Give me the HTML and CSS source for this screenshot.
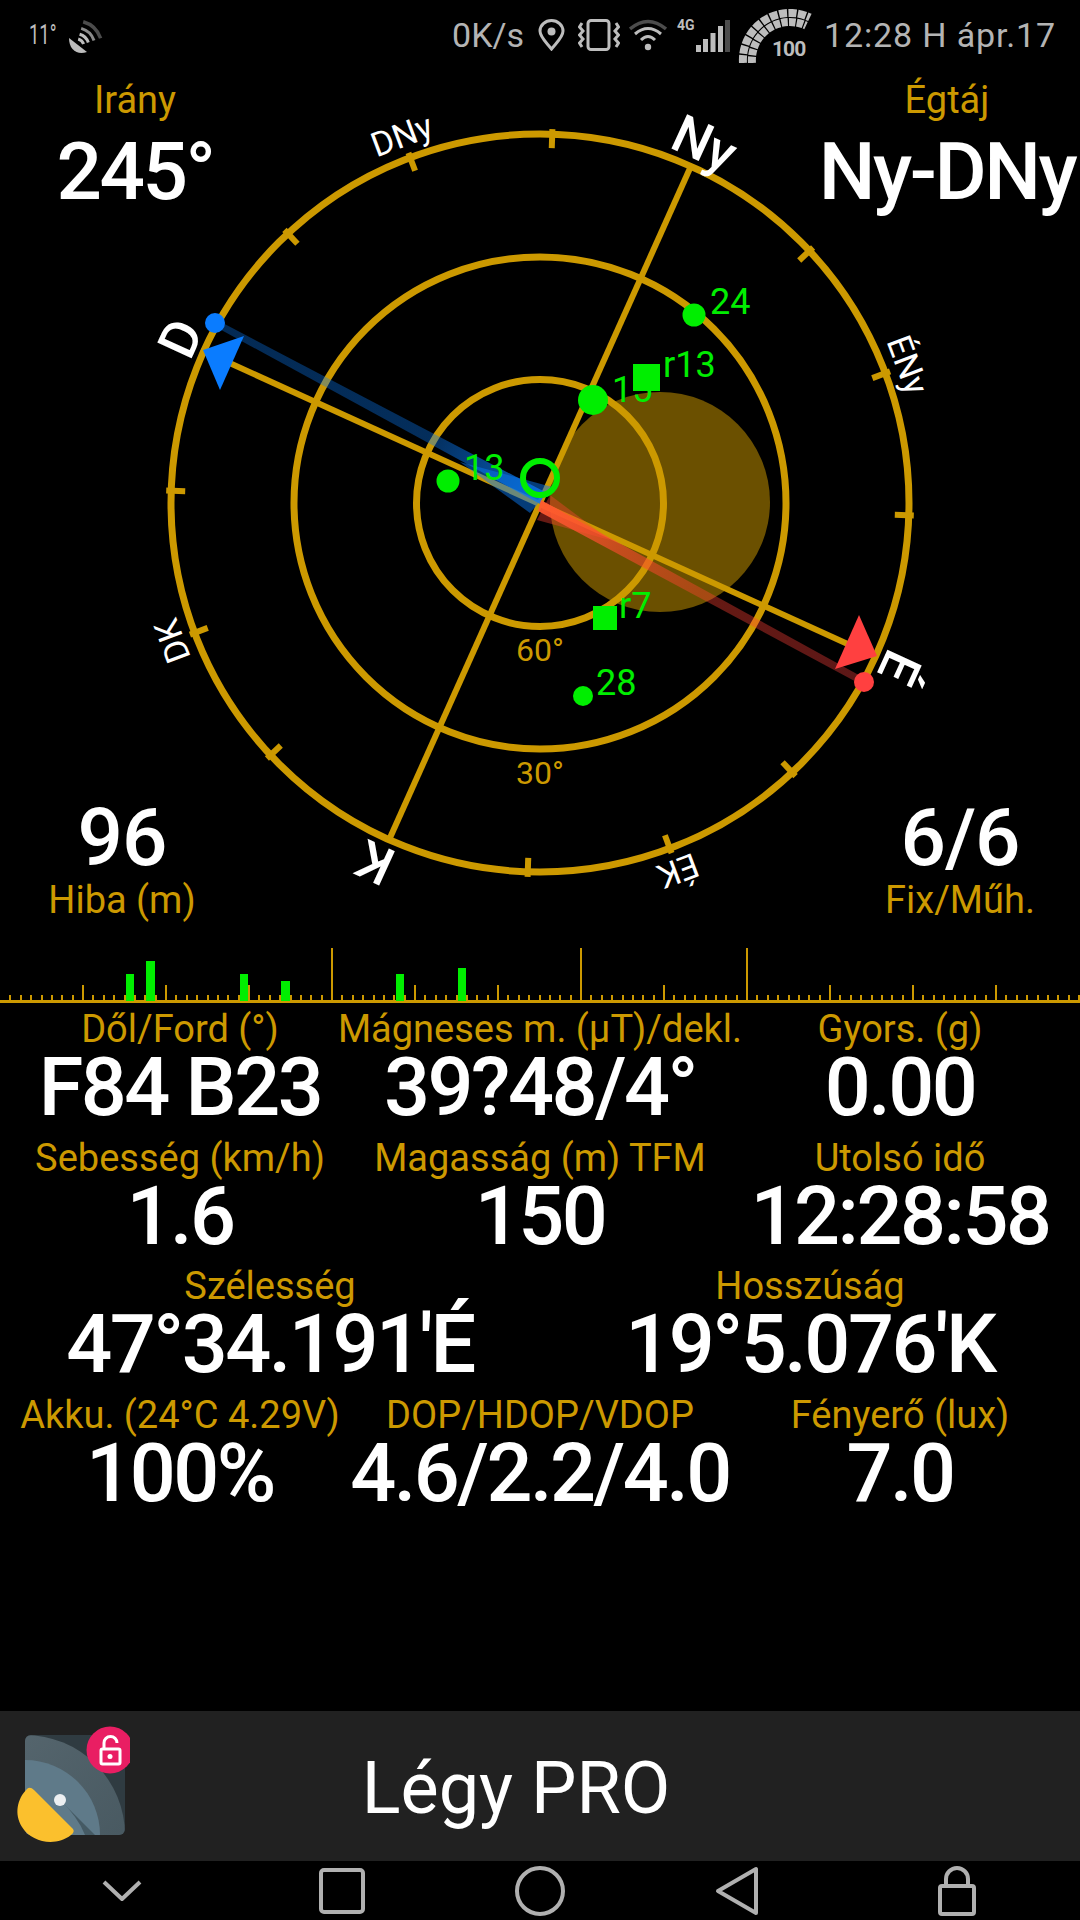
FILE: index.html
```html
<!DOCTYPE html>
<html lang="hu">
<head>
<meta charset="utf-8">
<title>GPS</title>
<link rel="stylesheet" href="styles.css">
</head>
<body>
<div class="screen">
  <header class="status">
    <span class="temp">11°</span>
    <svg class="ic-sat" viewBox="0 0 34 34" width="34" height="34">
      <path class="fill-grey" d="M0 18 L18 32 Q9 35 3.500 29 Q0 25 0 18Z"/>
      <path class="st-grey" d="M9.200 19 A8 8 0 0 1 14.600 24.100 M10.600 14.200 A13 13 0 0 1 19.300 22.500"/>
      <path class="st-mid" d="M12.200 8.400 A19 19 0 0 1 25 20.500"/>
      <path class="st-dim" d="M14.200 1.700 A26 26 0 0 1 31.600 18.200"/>
    </svg>
    <span class="grow"></span>
    <span class="stat-text rate">0K/s</span>
    <svg class="ic-pin" viewBox="0 0 27 32" width="27" height="32">
      <path class="st-grey" d="M13.500 30 C8 23 2 18 2 12 A11.500 10.500 0 0 1 25 12 C25 18 19 23 13.500 30Z"/>
      <circle class="fill-grey" cx="13.500" cy="12.500" r="4"/>
    </svg>
    <svg class="ic-vib" viewBox="0 0 42 32" width="42" height="32">
      <rect class="st-grey" x="10" y="1.500" width="21" height="29" rx="3"/>
      <path class="st-grey" d="M4 4 L1.500 8 L5 12 L1.500 16 L5 20 L1.500 24 L4 28 M38 4 L40.500 8 L37 12 L40.500 16 L37 20 L40.500 24 L38 28"/>
    </svg>
    <svg class="ic-wifi" viewBox="0 0 38 32" width="38" height="32">
      <path class="st-dim" d="M1 10 Q19 -5 37 10"/>
      <path class="st-grey" d="M6 15 Q19 4 32 15 M12 21 Q19 14 26 21"/>
      <circle class="fill-grey" cx="19" cy="28" r="3.200"/>
    </svg>
    <div class="signal">
      <span class="net">4G</span>
      <svg class="ic-bars" viewBox="0 0 34 33" width="34" height="33">
        <rect class="fill-grey" x="0" y="25" width="5" height="7"/>
        <rect class="fill-grey" x="7" y="19" width="5" height="13"/>
        <rect class="fill-grey" x="14.500" y="13" width="5" height="19"/>
        <rect class="fill-grey" x="22" y="6" width="5" height="26"/>
        <rect class="fill-dim" x="29" y="0" width="5" height="32"/>
      </svg>
    </div>
    <div class="gauge">
      <svg viewBox="0 0 76 54" width="76" height="54">
        <path class="gauge-arc outer" d="M5 54 A47 47 0 0 1 71.900 8.400"/>
        <path class="gauge-arc inner" d="M14 54 A38 38 0 0 1 68 16.600"/>
      </svg>
      <span class="gauge-num">100</span>
    </div>
    <span class="stat-text clock">12:28 H ápr.17</span>
  </header>

  <section class="compass">
    <svg class="dial" viewBox="0 70 1080 878" width="1080" height="878">
      <defs>
        <linearGradient id="blueBand" gradientUnits="userSpaceOnUse" x1="215" y1="323" x2="540" y2="505">
          <stop offset="0" stop-color="#0a78f0" stop-opacity=".35"/>
          <stop offset=".65" stop-color="#0a78f0" stop-opacity=".38"/>
          <stop offset="1" stop-color="#0a78f0" stop-opacity=".8"/>
        </linearGradient>
        <linearGradient id="redBand" gradientUnits="userSpaceOnUse" x1="540" y1="505" x2="864" y2="682">
          <stop offset="0" stop-color="#ff5a30" stop-opacity=".95"/>
          <stop offset=".25" stop-color="#ff4a30" stop-opacity=".6"/>
          <stop offset=".5" stop-color="#ff4030" stop-opacity=".4"/>
          <stop offset="1" stop-color="#ff4040" stop-opacity=".36"/>
        </linearGradient>
      </defs>
      <circle class="shade" cx="660" cy="502" r="110"/>
      <circle class="ring" cx="540" cy="503" r="369"/>
      <circle class="ring" cx="540" cy="503" r="246"/>
      <circle class="ring" cx="540" cy="503" r="123.500"/>
      <line class="axis" x1="691" y1="166" x2="389" y2="840"/>
      <line class="axis" x1="201" y1="350" x2="874" y2="656"/>
      <g class="ticks">
        <line x1="540" y1="129" x2="540" y2="148" transform="rotate(1.9 540 503)"/>
        <line x1="540" y1="129" x2="540" y2="148" transform="rotate(46.9 540 503)"/>
        <line x1="540" y1="129" x2="540" y2="148" transform="rotate(69.4 540 503)"/>
        <line x1="540" y1="129" x2="540" y2="148" transform="rotate(91.9 540 503)"/>
        <line x1="540" y1="129" x2="540" y2="148" transform="rotate(136.9 540 503)"/>
        <line x1="540" y1="129" x2="540" y2="148" transform="rotate(159.4 540 503)"/>
        <line x1="540" y1="129" x2="540" y2="148" transform="rotate(181.9 540 503)"/>
        <line x1="540" y1="129" x2="540" y2="148" transform="rotate(226.9 540 503)"/>
        <line x1="540" y1="129" x2="540" y2="148" transform="rotate(249.4 540 503)"/>
        <line x1="540" y1="129" x2="540" y2="148" transform="rotate(271.9 540 503)"/>
        <line x1="540" y1="129" x2="540" y2="148" transform="rotate(316.9 540 503)"/>
        <line x1="540" y1="129" x2="540" y2="148" transform="rotate(339.4 540 503)"/>
      </g>
      <g class="dir-major">
        <text x="540" y="126" transform="rotate(24.6 540 503)">Ny</text>
        <text x="540" y="126" transform="rotate(114.6 540 503)">É</text>
        <text x="540" y="126" transform="rotate(204.6 540 503)">K</text>
        <text x="540" y="126" transform="rotate(294.6 540 503)">D</text>
      </g>
      <g class="dir-minor">
        <text x="540" y="122" transform="rotate(339.4 540 503)">DNy</text>
        <text x="540" y="122" transform="rotate(69.4 540 503)">ÉNy</text>
        <text x="540" y="122" transform="rotate(159.4 540 503)">ÉK</text>
        <text x="540" y="122" transform="rotate(249.4 540 503)">DK</text>
      </g>
      <text class="deg" x="540" y="661">60°</text>
      <text class="deg" x="540" y="784">30°</text>
      <polygon fill="url(#blueBand)" points="217,320 545,492 540,504 214,326"/>
      <polygon class="wedge-blue" points="552,487 530,513 460,462"/>
      <polygon class="wedge-red" points="550,495 537,520 610,540"/>
      <polygon fill="url(#redBand)" points="541,500 866,679 862,685 538,511"/>
      <circle class="blue" cx="215" cy="323" r="10"/>
      <circle class="red" cx="864" cy="682" r="10"/>
      <polygon class="blue" points="244,336 203,350 220,390"/>
      <polygon class="red" points="859,615 877,656 835,669"/>
      <g class="sats">
        <circle cx="540" cy="478" r="17" class="sat-ring"/>
        <circle cx="448" cy="481" r="11.500"/>
        <text x="464" y="480">13</text>
        <circle cx="593" cy="400" r="15"/>
        <text x="612" y="402">15</text>
        <circle cx="694" cy="315" r="11.500"/>
        <text x="710" y="314">24</text>
        <circle cx="583" cy="696" r="10"/>
        <text x="596" y="695">28</text>
        <rect x="633" y="364" width="27" height="27"/>
        <text x="663" y="377">r13</text>
        <rect x="593" y="606" width="24" height="24"/>
        <text x="619" y="618">r7</text>
      </g>
    </svg>
    <div class="corners">
      <div class="corner-row">
        <div class="corner c-heading"><span class="label">Irány</span><span class="corner-val">245°</span></div>
        <div class="corner c-cardinal"><span class="label">Égtáj</span><span class="corner-val">Ny-DNy</span></div>
      </div>
      <div class="corner-row">
        <div class="corner c-error"><span class="corner-val small">96</span><span class="label">Hiba (m)</span></div>
        <div class="corner c-fix"><span class="corner-val small">6/6</span><span class="label">Fix/Műh.</span></div>
      </div>
    </div>
  </section>

  <svg class="strip" viewBox="0 948 1080 56" width="1080" height="56">
    <path class="tick" d="M0 1001m10 -6v6m11 -6v6m10 -6v6m11 -6v6m10 -6v6m10 -6v6m11 -6v6m10 -6v6m10 -6v6m11 -6v6m10 -6v6m11 -6v6m10 -6v6m10 -6v6m11 -6v6m10 -6v6m10 -6v6m11 -6v6m10 -6v6m11 -6v6m10 -6v6m10 -6v6m11 -6v6m10 -6v6m10 -6v6m11 -6v6m10 -6v6m11 -6v6m10 -6v6m10 -6v6m11 -6v6m10 -6v6m10 -6v6m11 -6v6m10 -6v6m11 -6v6m10 -6v6m10 -6v6m11 -6v6m10 -6v6m10 -6v6m11 -6v6m10 -6v6m11 -6v6m10 -6v6m10 -6v6m11 -6v6m10 -6v6m10 -6v6m11 -6v6m10 -6v6m11 -6v6m10 -6v6m10 -6v6m11 -6v6m10 -6v6m10 -6v6m11 -6v6m10 -6v6m11 -6v6m10 -6v6m10 -6v6m11 -6v6m10 -6v6m10 -6v6m11 -6v6m10 -6v6m11 -6v6m10 -6v6m10 -6v6m11 -6v6m10 -6v6m10 -6v6m11 -6v6m10 -6v6m11 -6v6m10 -6v6m10 -6v6m11 -6v6m10 -6v6m10 -6v6m11 -6v6m10 -6v6m11 -6v6m10 -6v6m10 -6v6m11 -6v6m10 -6v6m10 -6v6m11 -6v6m10 -6v6m11 -6v6m10 -6v6m10 -6v6m11 -6v6m10 -6v6m10 -6v6m11 -6v6m10 -6v6m11 -6v6m10 -6v6m10 -6v6m11 -6v6m10 -6v6"/>
    <path class="tick" d="M83 1001v-16M166 1001v-16M249 1001v-16M415 1001v-16M498 1001v-16M664 1001v-16M830 1001v-16M913 1001v-16M996 1001v-16"/>
    <path class="tick" d="M332 1001v-53M581 1001v-53M747 1001v-53"/>
    <rect class="gold" x="0" y="1000" width="1080" height="3"/>
    <g class="bars">
      <rect x="126" y="974" width="8" height="27"/>
      <rect x="146" y="961" width="9" height="40"/>
      <rect x="240" y="974" width="8" height="27"/>
      <rect x="281" y="981" width="9" height="20"/>
      <rect x="396" y="974" width="8" height="27"/>
      <rect x="458" y="968" width="8" height="33"/>
    </g>
  </svg>

  <main class="data">
    <div class="row thirds">
      <div class="cell"><span class="label">Dől/Ford (°)</span><span class="value">F84 B23</span></div>
      <div class="cell"><span class="label">Mágneses m. (µT)/dekl.</span><span class="value">39?48/4°</span></div>
      <div class="cell"><span class="label">Gyors. (g)</span><span class="value">0.00</span></div>
    </div>
    <div class="row thirds">
      <div class="cell"><span class="label">Sebesség (km/h)</span><span class="value">1.6</span></div>
      <div class="cell"><span class="label">Magasság (m) TFM</span><span class="value">150</span></div>
      <div class="cell"><span class="label">Utolsó idő</span><span class="value">12:28:58</span></div>
    </div>
    <div class="row halves">
      <div class="cell"><span class="label">Szélesség</span><span class="value">47°34.191'É</span></div>
      <div class="cell"><span class="label">Hosszúság</span><span class="value">19°5.076'K</span></div>
    </div>
    <div class="row thirds">
      <div class="cell"><span class="label">Akku. (24°C 4.29V)</span><span class="value">100%</span></div>
      <div class="cell"><span class="label">DOP/HDOP/VDOP</span><span class="value">4.6/2.2/4.0</span></div>
      <div class="cell"><span class="label">Fényerő (lux)</span><span class="value">7.0</span></div>
    </div>
  </main>

  <aside class="promo">
    <div class="app-icon">
      <svg viewBox="0 5 130 124" width="130" height="124">
        <defs>
          <clipPath id="tile"><rect x="25" y="16" width="100" height="100" rx="6"/></clipPath>
          <linearGradient id="outerArc" x1="0" y1="0" x2="1" y2="1">
            <stop offset="0" stop-color="#5a6a72"/>
            <stop offset="1" stop-color="#43545c"/>
          </linearGradient>
        </defs>
        <g clip-path="url(#tile)">
          <rect x="25" y="16" width="100" height="100" fill="#2f3b41"/>
          <circle cx="25" cy="116" r="100" fill="url(#outerArc)"/>
          <circle cx="25" cy="116" r="75" fill="#5f7a89"/>
          <path d="M60 81 L125 146 L125 116 L85 116 Q78 98 60 81Z" fill="#455a64"/>
        </g>
        <circle cx="60" cy="81" r="6" fill="#eceff1"/>
        <path d="M27 70 Q30 67 34 71 L73 110 Q75 113 71 116 C56 128 32 124 22 108 C14 95 17 80 27 70Z" fill="#fbc02d"/>
        <circle cx="110" cy="31" r="23.500" fill="#e91e63"/>
        <g class="lock-ic">
          <rect x="101" y="30" width="19" height="15" rx="1.500"/>
          <path d="M104 30 V24 A6.500 6.500 0 0 1 117 24"/>
        </g>
        <circle cx="110" cy="37.500" r="2.500" fill="#fff"/>
      </svg>
    </div>
    <div class="promo-title">Légy PRO</div>
  </aside>

  <nav class="navbar">
    <div class="nav-item"><svg viewBox="0 0 40 22" width="40" height="22"><path class="nav-st" d="M2 2 L20 19 L38 2"/></svg></div>
    <div class="nav-item"><svg viewBox="0 0 46 46" width="46" height="46"><rect class="nav-st" x="2" y="2" width="42" height="42" rx="3"/></svg></div>
    <div class="nav-item"><svg viewBox="0 0 50 50" width="50" height="50"><circle class="nav-st" cx="25" cy="25" r="23"/></svg></div>
    <div class="nav-item"><svg viewBox="0 0 44 50" width="44" height="50"><path class="nav-st" d="M41 3 V47 L3 25Z"/></svg></div>
    <div class="nav-item"><svg viewBox="0 0 40 50" width="40" height="50"><rect class="nav-st" x="3" y="20" width="34" height="28" rx="2"/><path class="nav-st" d="M9 20 V13 A11 11 0 0 1 31 13 V20"/></svg></div>
  </nav>
</div>
</body>
</html>
```
FILE: styles.css
```css
* { box-sizing: border-box; }
html, body { margin: 0; padding: 0; background: #000; }
body { font-family: Roboto, "Noto Sans", sans-serif; color: #fff; }
.screen { width: 1080px; height: 1920px; display: flex; flex-direction: column; overflow: hidden; background: #000; }

/* status bar */
.status { height: 70px; display: flex; align-items: center; padding: 0 24px 0 29px; color: #b4b4b4; flex: none; }
.status svg { display: block; flex: none; }
.grow { flex: 1; }
.temp { font-size: 27px; width: 40px; line-height: 1; transform: scaleX(.68); transform-origin: left center; color: #bdbdbd; }
.ic-sat { margin-top: 3px; }
.stat-text { font-size: 34px; font-weight: 400; line-height: 1; white-space: nowrap; }
.rate { margin-right: 14px; }
.clock { margin-left: 10px; letter-spacing: .850px; }
.fill-grey { fill: #bdbdbd; }
.fill-dim { fill: #4c4c4c; }
.st-grey { fill: none; stroke: #bdbdbd; stroke-width: 3; }
.st-mid { fill: none; stroke: #8a8a8a; stroke-width: 3; }
.st-dim { fill: none; stroke: #4c4c4c; stroke-width: 3.500; }
.ic-vib { margin: 0 9px 0 13px; }
.ic-wifi { margin-right: 10px; }
.signal { position: relative; width: 52px; height: 33px; margin-right: 9px; }
.net { position: absolute; left: 0; top: -1px; font-size: 14px; font-weight: 700; color: #bdbdbd; line-height: 1; }
.ic-bars { position: absolute; left: 19px; top: 1px; }
.gauge { position: relative; width: 76px; height: 54px; margin-top: 2px; }
.gauge-arc { fill: none; stroke: #bdbdbd; stroke-width: 8; }
.gauge-arc.outer { stroke-dasharray: 8 1.400; }
.gauge-arc.inner { stroke-dasharray: 6.500 1.200; }
.gauge-num { position: absolute; left: 34px; top: 30px; font-size: 21px; font-weight: 700; letter-spacing: -1px; color: #bdbdbd; line-height: 1; }

/* compass */
.compass { position: relative; height: 878px; flex: none; }
.dial { display: block; }
.shade { fill: #6b5000; }
.ring { fill: none; stroke: #cc9900; stroke-width: 7; }
.axis { fill: none; stroke: #cc9900; stroke-width: 6; }
.ticks line { stroke: #cc9900; stroke-width: 6; }
.dir-major text, .dir-minor text { fill: #fff; text-anchor: middle; }
.dir-major text { font-size: 53px; font-weight: 500; }
.dir-minor text { font-size: 34px; }
.deg { fill: #cc9900; font-size: 32px; text-anchor: middle; }
.blue { fill: #0a7cff; }
.red { fill: #ff4040; }
.wedge-blue { fill: #0a78f0; fill-opacity: .5; }
.wedge-red { fill: #ff4030; fill-opacity: .4; }
.sats circle, .sats rect { fill: #00ee00; }
.sats circle.sat-ring { fill: none; stroke: #00ee00; stroke-width: 6; }
.sats text { fill: #00ee00; font-size: 36px; }
.corners { position: absolute; inset: 0; display: flex; flex-direction: column; justify-content: space-between; padding: 8px 0 26px; pointer-events: none; }
.corner-row { display: flex; justify-content: space-between; }
.corner { display: flex; flex-direction: column; align-items: center; }
.label { color: #cc9900; font-size: 38px; line-height: 44px; white-space: nowrap; }
.corner-val { font-size: 80px; font-weight: 500; line-height: 100px; letter-spacing: -2.500px; color: #fff; white-space: nowrap; }
.corner-val.small { line-height: 80px; letter-spacing: -1px; }
.c-heading { width: 270px; }
.c-cardinal { width: 270px; margin-right: -2px; }
.c-error { width: 244px; }
.c-fix { width: 240px; }

/* scale strip */
.strip { display: block; flex: none; }
.gold { fill: #cc9900; }
.tick { fill: none; stroke: #cc9900; stroke-width: 2; }
.bars { fill: #00ee00; }

/* data grid */
.data { flex: 1; display: flex; flex-direction: column; padding-top: 3px; }
.row { display: grid; height: 128.500px; flex: none; }
.thirds { grid-template-columns: repeat(3, minmax(0, 1fr)); }
.halves { grid-template-columns: repeat(2, minmax(0, 1fr)); }
.cell { display: flex; flex-direction: column; align-items: center; white-space: nowrap; }
.value { font-size: 81px; font-weight: 500; line-height: 74px; letter-spacing: -2.500px; color: #fff; }

/* promo */
.promo { height: 150px; background: #212121; display: flex; align-items: center; flex: none; }
.app-icon { width: 130px; flex: none; }
.app-icon svg { display: block; }
.lock-ic { fill: none; stroke: #fff; stroke-width: 3; }
.promo-title { flex: 1; text-align: center; padding: 6px 178px 0 0; font-size: 72px; line-height: 84px; color: #fff; }

/* nav */
.navbar { height: 59px; flex: none; display: grid; grid-template-columns: 244px 196px 200px 194px 246px; align-items: center; justify-items: center; }
.nav-item { display: flex; }
.nav-st { fill: none; stroke: #b0b0b0; stroke-width: 4; stroke-linejoin: round; }
```
